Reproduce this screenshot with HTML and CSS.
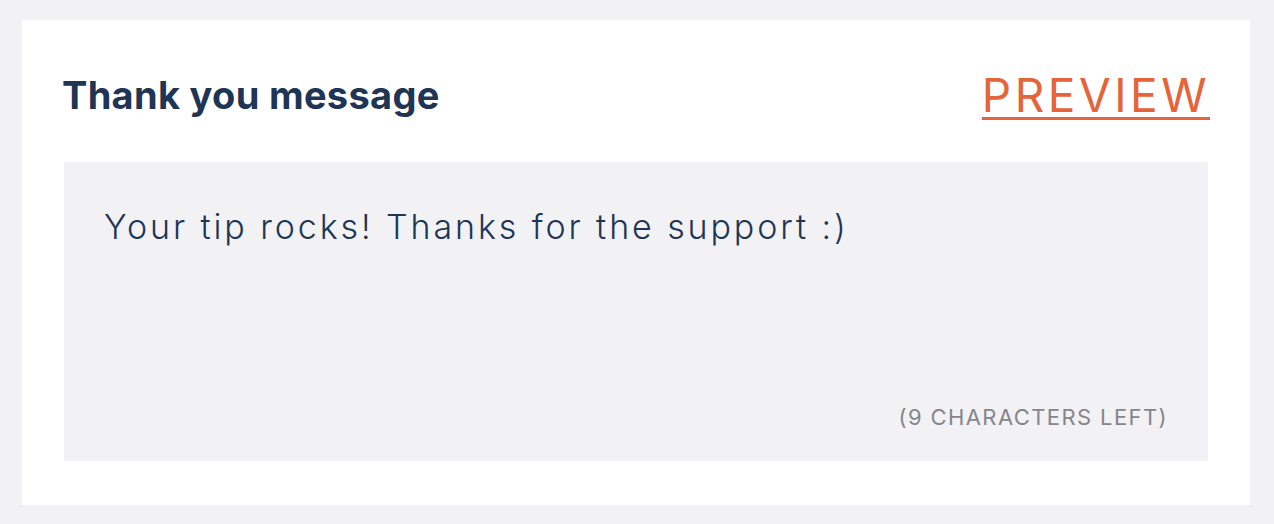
FILE: index.html
```html
<!DOCTYPE html>
<html lang="en">
<head>
<meta charset="utf-8">
<title>Thank you message</title>
<link rel="stylesheet" href="styles.css">
</head>
<body>
<div class="page">
  <section class="card">
    <header class="card-header">
      <h2 class="title">Thank you message</h2>
      <a class="preview" href="#">PREVIEW</a>
    </header>
    <div class="message-box">
      <p class="message">Your tip rocks! Thanks for the support :)</p>
      <p class="counter">(9 CHARACTERS LEFT)</p>
    </div>
  </section>
</div>
</body>
</html>
```

FILE: styles.css
```css
html, body {
  margin: 0;
  padding: 0;
  background: #f2f2f4;
}
.page {
  padding: 20px 24px 19px 22px;
  font-family: Inter, "DejaVu Sans", sans-serif;
}
.card {
  background: #ffffff;
  height: 485px;
  box-sizing: border-box;
  padding: 42px 42px 44px 42px;
  display: flex;
  flex-direction: column;
}
.card-header {
  height: 66px;
  margin-bottom: 34px;
  display: flex;
  align-items: center;
  justify-content: space-between;
}
.title {
  margin: 0 0 0 -2px;
  font-size: 38px;
  font-weight: 700;
  color: #1f3556;
  letter-spacing: 0.3px;
}
.preview {
  margin-right: -2px;
  font-size: 46px;
  font-weight: 400;
  color: #e5643a;
  text-decoration: underline;
  text-decoration-thickness: 3px;
  text-underline-offset: 5px;
  letter-spacing: 3.5px;
}
.message-box {
  flex: 1;
  background: #f2f2f4;
  padding: 44px 40px 31px 40px;
  display: flex;
  flex-direction: column;
  justify-content: space-between;
}
.message {
  margin: 0;
  font-size: 34px;
  font-weight: 300;
  color: #1f3556;
  letter-spacing: 2.9px;
}
.counter {
  margin: 0;
  align-self: flex-end;
  font-size: 22px;
  font-weight: 400;
  color: #85858c;
  letter-spacing: 1.4px;
}
```
